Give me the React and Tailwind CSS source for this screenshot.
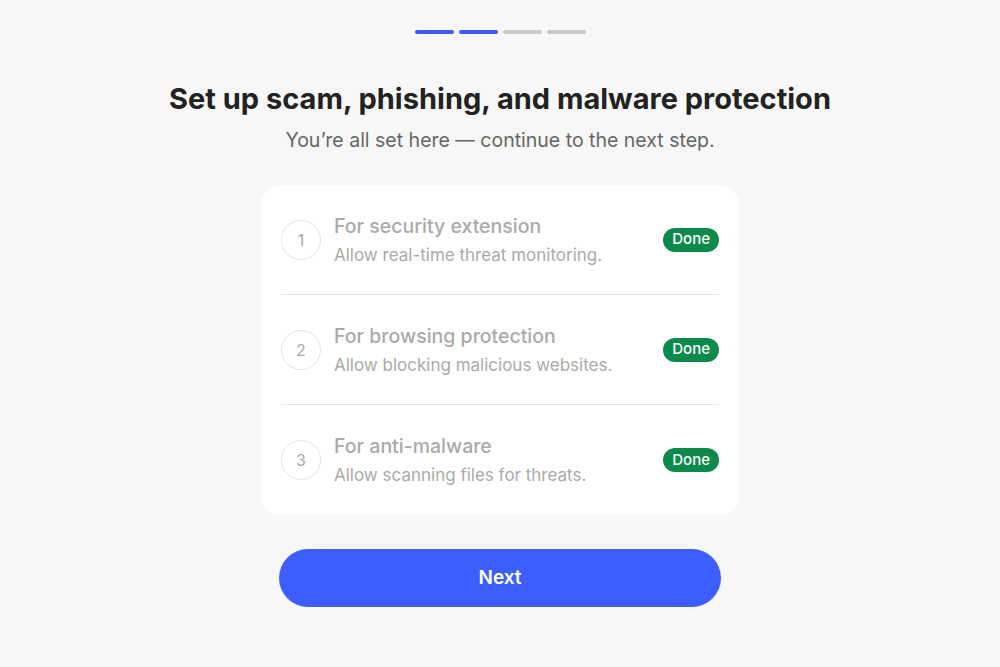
export default function App() {
  const steps = [
    { n: 1, title: "For security extension", desc: "Allow real-time threat monitoring." },
    { n: 2, title: "For browsing protection", desc: "Allow blocking malicious websites." },
    { n: 3, title: "For anti-malware", desc: "Allow scanning files for threats." },
  ];

  return (
    <div className="min-h-screen bg-[#f7f7f7] flex flex-col items-center font-['Inter',sans-serif]">
      {/* progress */}
      <div className="flex gap-[5px] mt-[30px]">
        <div className="w-[39px] h-[4px] rounded-full bg-[#3b5bfd]" />
        <div className="w-[39px] h-[4px] rounded-full bg-[#3b5bfd]" />
        <div className="w-[39px] h-[4px] rounded-full bg-[#c9c9c9]" />
        <div className="w-[39px] h-[4px] rounded-full bg-[#c9c9c9]" />
      </div>

      <h1 className="mt-[47px] text-[29px] leading-[36px] font-bold text-[#222]">
        Set up scam, phishing, and malware protection
      </h1>
      <p className="mt-[11px] text-[19.5px] leading-[24px] text-[#666]">
        You’re all set here — continue to the next step.
      </p>

      {/* steps card */}
      <div className="mt-[33px] w-[478px] bg-white rounded-[20px] px-5">
        {steps.map((s, i) => (
          <div
            key={s.n}
            className={
              "h-[110px] flex items-center " +
              (i < steps.length - 1 ? "border-b border-[#e3e3e3]" : "")
            }
          >
            <div className="w-[40px] h-[40px] rounded-full border border-[#e3e3e3] flex items-center justify-center text-[16px] text-[#aaa]">
              {s.n}
            </div>
            <div className="ml-[13px] flex-1">
              <div className="text-[19.5px] leading-[25px] font-medium text-[#aaa]">{s.title}</div>
              <div className="mt-[5px] text-[17px] leading-[22px] text-[#aaa]">{s.desc}</div>
            </div>
            <span className="px-[9px] h-[24px] flex items-center rounded-full bg-[#0b8a4c] text-white text-[15px] font-medium">
              Done
            </span>
          </div>
        ))}
      </div>

      <button className="mt-[34px] w-[442px] h-[58px] rounded-full bg-[#3d5efd] text-white text-[19px] font-semibold">
        Next
      </button>
    </div>
  );
}
